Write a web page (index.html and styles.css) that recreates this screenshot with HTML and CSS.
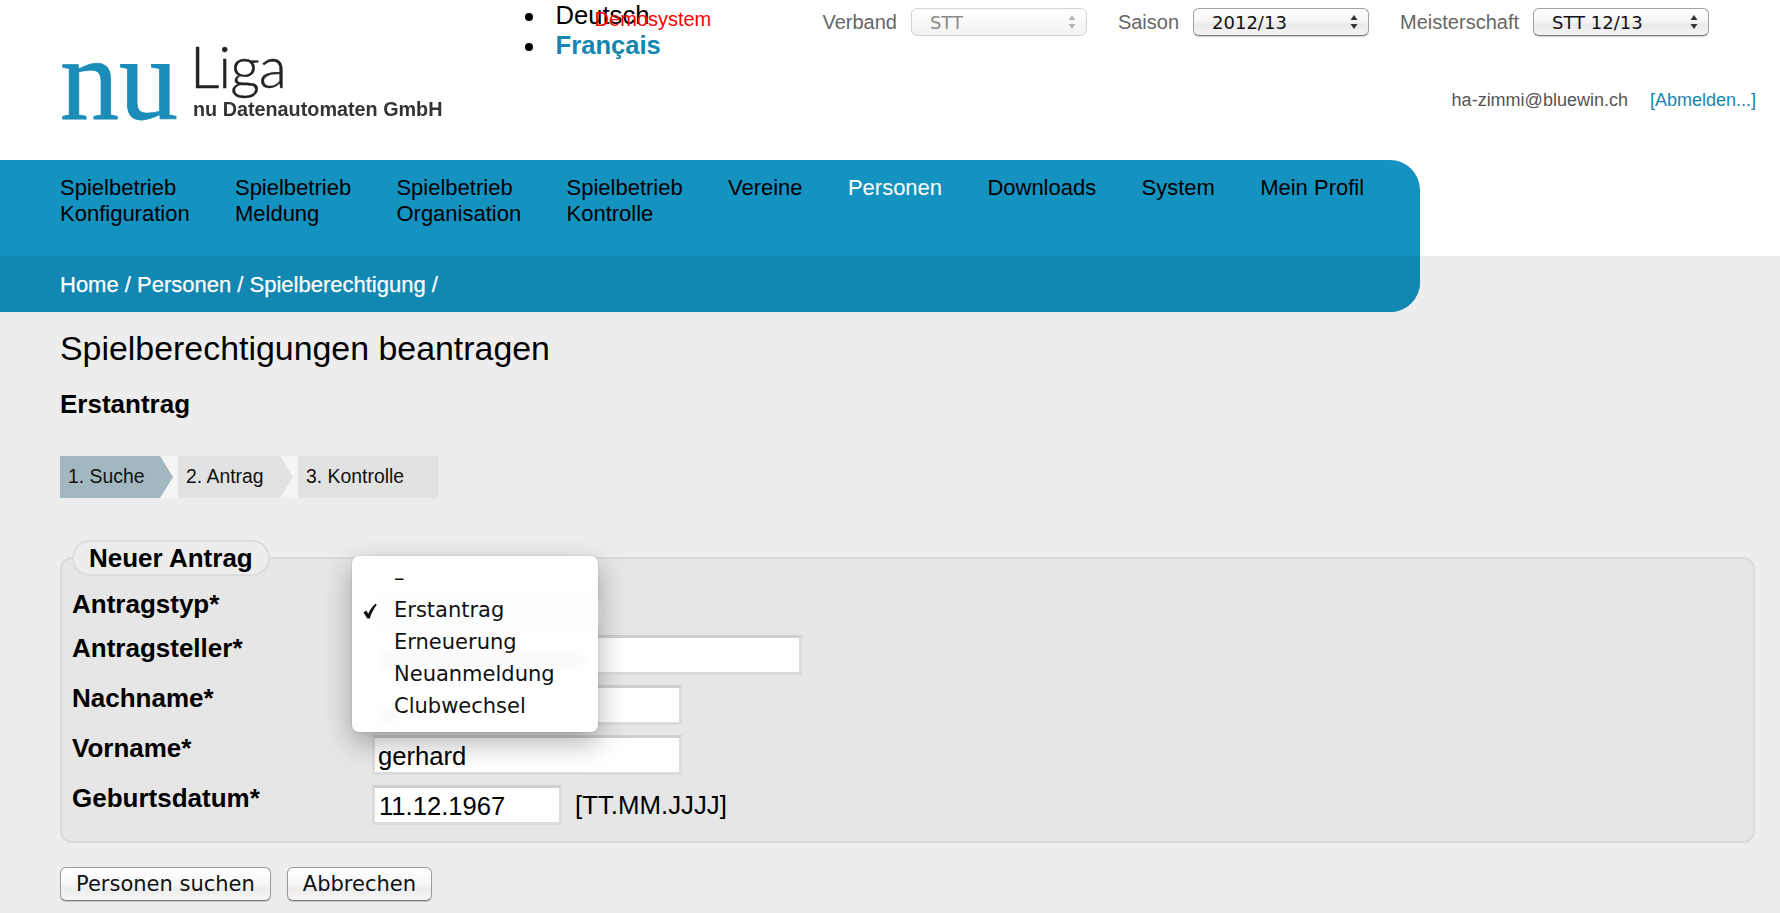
FILE: index.html
```html
<!DOCTYPE html>
<html lang="de">
<head>
<meta charset="utf-8">
<title>nuLiga – Spielberechtigungen beantragen</title>
<link rel="stylesheet" href="styles.css">
</head>
<body>
<header class="header">
  <div class="logo">
    <span class="logo-nu">nu</span>
    <div class="logo-text">
      <span class="logo-liga">Liga</span>
      <span class="logo-sub">nu Datenautomaten GmbH</span>
    </div>
  </div>
  <ul class="langs">
    <li>Deutsch</li>
    <li><a class="lang-link" href="#">Français</a></li>
    <li class="demo">Demosystem</li>
  </ul>
  <div class="tools">
    <div class="filters">
      <span class="filter-label">Verband</span>
      <div class="select select-off"><span>STT</span><svg class="updown" viewBox="0 0 8 16"><path d="M4 1 7.500 6H.5zM4 15 .5 10h7z"/></svg></div>
      <span class="filter-label">Saison</span>
      <div class="select"><span>2012/13</span><svg class="updown" viewBox="0 0 8 16"><path d="M4 1 7.500 6H.5zM4 15 .5 10h7z"/></svg></div>
      <span class="filter-label">Meisterschaft</span>
      <div class="select"><span>STT 12/13</span><svg class="updown" viewBox="0 0 8 16"><path d="M4 1 7.500 6H.5zM4 15 .5 10h7z"/></svg></div>
    </div>
    <div class="user">
      <span>ha-zimmi@bluewin.ch</span>
      <a href="#">[Abmelden...]</a>
    </div>
  </div>
</header>

<nav class="nav">
  <div class="nav-main">
    <a href="#">Spielbetrieb<br>Konfiguration</a>
    <a href="#">Spielbetrieb<br>Meldung</a>
    <a href="#">Spielbetrieb<br>Organisation</a>
    <a href="#">Spielbetrieb<br>Kontrolle</a>
    <a href="#">Vereine</a>
    <a href="#" class="active">Personen</a>
    <a href="#">Downloads</a>
    <a href="#">System</a>
    <a href="#">Mein Profil</a>
  </div>
  <div class="crumbs">Home / Personen / Spielberechtigung /</div>
</nav>

<main class="content">
  <h1>Spielberechtigungen beantragen</h1>
  <h2>Erstantrag</h2>
  <div class="steps">
    <div class="step step-now">1. Suche</div>
    <div class="sep sep-now"></div>
    <div class="step step-two">2. Antrag</div>
    <div class="sep"></div>
    <div class="step step-three">3. Kontrolle</div>
  </div>

  <fieldset class="box">
    <legend>Neuer Antrag</legend>
    <div class="form">
      <label class="first">Antragstyp*</label><div class="first"></div>
      <label>Antragsteller*</label><input class="wide" type="text" value="">
      <label>Nachname*</label><input class="mid" type="text" value="">
      <label>Vorname*</label><input class="mid" type="text" value="gerhard">
      <label>Geburtsdatum*</label>
      <div class="date-row"><input class="date" type="text" value="11.12.1967"><span>[TT.MM.JJJJ]</span></div>
    </div>
  </fieldset>

  <div class="buttons">
    <button type="button">Personen suchen</button>
    <button type="button">Abbrechen</button>
  </div>
</main>

<div class="menu">
  <i class="ghost ghost-select"></i>
  <i class="ghost ghost-name"></i>
  <i class="ghost ghost-last"></i>
  <div class="menu-item">–</div>
  <div class="menu-item"><svg class="check" viewBox="0 0 14 16"><path d="M.5 9.500 3.300 7.500 5.300 10.800C7 6.800 9.300 3.300 12.500.8L13.800 1.800C10.800 5.800 8.300 10.300 6.800 15.500H4.300z"/></svg>Erstantrag</div>
  <div class="menu-item">Erneuerung</div>
  <div class="menu-item">Neuanmeldung</div>
  <div class="menu-item">Clubwechsel</div>
</div>
</body>
</html>
```
FILE: styles.css
```css
* { box-sizing: border-box; }
html, body { height: 100%; }
body {
  margin: 0;
  overflow: hidden;
  font-family: "Liberation Sans", Arial, sans-serif;
  color: #000;
  background: linear-gradient(#fff 256px, #ededed 256px);
}
a { text-decoration: none; color: inherit; }

/* header */
.header { display: flex; height: 160px; padding-left: 60px; }
.logo { width: 456px; display: flex; align-items: flex-start; filter: blur(.45px); }
.logo-nu {
  margin-top: 25px;
  width: 130px;
  font-family: "Liberation Serif", serif;
  font-size: 118px;
  line-height: 110px;
  color: #1b8db8;
  -webkit-text-stroke: .8px #1b8db8;
}
.logo-text { display: flex; flex-direction: column; padding-top: 33px; }
.logo-liga { font-family: Lato, sans-serif; font-weight: 300; font-size: 58px; line-height: 66px; letter-spacing: -1px; color: #222; -webkit-text-stroke: .4px #222; }
.logo-sub { font-weight: 700; font-size: 19.8px; line-height: 22px; margin: -1px 0 0 3px; color: #333; }
.langs {
  position: relative;
  margin: 0;
  padding-left: 40px;
  width: 290px;
  font-size: 25.6px;
  line-height: 30px;
}
.langs li { padding-left: 9px; }
.lang-link { font-weight: 700; color: #1486b0; }
.langs .demo {
  position: absolute;
  left: 88px;
  top: 7px;
  padding-left: 0;
  list-style: none;
  font-size: 20px;
  line-height: 24px;
  color: #f00;
}
.tools { flex: 1; display: flex; flex-direction: column; padding-right: 24px; }
.filters {
  display: flex;
  align-items: center;
  justify-content: flex-end;
  padding: 8px 47px 0 0;
}
.filter-label { font-size: 20px; line-height: 28px; color: #666; margin: 0 14px 0 31px; }
.select {
  width: 176px;
  height: 28px;
  padding: 0 10px 0 18px;
  display: flex;
  align-items: center;
  justify-content: space-between;
  font-family: "DejaVu Sans", sans-serif;
  font-size: 18px;
  color: #111;
  background: linear-gradient(#fff, #f6f6f6 45%, #e9e9e9 60%, #f4f4f4);
  border: 1px solid #a2a2a2;
  border-bottom-color: #7f7f7f;
  border-radius: 6px;
  box-shadow: 0 1px 1px rgba(0, 0, 0, .18);
}
.select-off { color: #8a8a8a; border-color: #d4d4d4; box-shadow: none; background: linear-gradient(#fff, #f8f8f8 50%, #f2f2f2); }
.updown { width: 8px; height: 16px; fill: #333; }
.select-off .updown { fill: #b5b5b5; }
.user {
  display: flex;
  justify-content: flex-end;
  gap: 22px;
  margin-top: 52px;
  font-size: 18px;
  line-height: 24px;
  color: #555;
}
.user a { color: #1a85b0; }

/* navigation */
.nav {
  width: 1420px;
  border-radius: 0 30px 30px 0;
  overflow: hidden;
  background: #1492c0;
}
.nav-main {
  height: 96px;
  padding: 15px 0 0 60px;
  display: flex;
  gap: 45.3px;
  font-size: 22px;
  line-height: 26px;
}
.active { color: #fff; }
.crumbs {
  height: 56px;
  padding-left: 60px;
  font-size: 22px;
  line-height: 58px;
  color: #fff;
  -webkit-text-stroke: .25px #fff;
  background: #1187b2;
}

/* content */
.content { padding-left: 60px; }
h1 { margin: 16px 0 0; font-size: 33.9px; line-height: 40px; font-weight: 400; }
h2 { margin: 21px 0 0; font-size: 26px; line-height: 30px; font-weight: 700; }
.steps { display: flex; height: 42px; margin-top: 37px; font-size: 19.4px; line-height: 41px; }
.step { color: #111; background: #e2e2e2; }
.step-now { width: 100px; padding-left: 8px; background: #a2b7bf; }
.step-two { width: 102px; padding-left: 8px; }
.step-three { width: 140px; padding-left: 8px; }
.sep { width: 18px; background: #f5f5f5; }
.sep::before {
  content: "";
  display: block;
  width: 13px;
  height: 100%;
  background: #e2e2e2;
  clip-path: polygon(0 0, 100% 50%, 0 100%);
}
.sep-now::before { background: #a2b7bf; }

.box {
  width: 1695px;
  margin: 42px 0 0;
  padding: 0 10px 16px;
  min-width: 0;
  background: #e6e6e6;
  border: 2px solid #dadada;
  border-radius: 12px;
}
legend {
  margin-left: 0;
  padding: 0 15px;
  height: 36px;
  font-size: 26px;
  line-height: 32px;
  font-weight: 700;
  background: #ededed;
  border: 2px solid #dcdcdc;
  border-radius: 18px;
}
.form {
  display: grid;
  grid-template-columns: 300px 1fr;
  grid-template-rows: 34px repeat(4, 40px);
  row-gap: 10px;
  padding-top: 15px;
  align-items: start;
}
.form label { font-size: 26px; line-height: 24px; font-weight: 700; margin-top: 1px; }
.form label.first { line-height: 26px; margin-top: 0; }
.form input {
  height: 40px;
  padding: 2px 3px 0;
  font-family: "Liberation Sans", sans-serif;
  font-size: 25.6px;
  color: #000;
  background: #fff;
  border: 3px solid #dcdcdc;
  border-top-color: #cfcfcf;
  border-radius: 0;
  outline: none;
}
.wide { width: 430px; }
.mid { width: 310px; }
.form .date { width: 190px; padding-left: 4px; }
.date-row { display: flex; align-items: center; gap: 13px; font-size: 25.8px; }
.buttons { display: flex; gap: 16px; margin-top: 24px; }
button {
  height: 34px;
  padding: 0 15px;
  font-family: "DejaVu Sans", sans-serif;
  font-size: 21px;
  line-height: 30px;
  color: #111;
  background: linear-gradient(#fff, #f7f7f7 50%, #ececec 65%, #f6f6f6);
  border: 1px solid #9c9c9c;
  border-bottom-color: #7c7c7c;
  border-radius: 6px;
  box-shadow: 0 1px 1px rgba(0, 0, 0, .18);
}

/* open dropdown, lies over the form */
.menu {
  position: absolute;
  left: 352px;
  top: 556px;
  width: 246px;
  height: 176px;
  padding-top: 6px;
  overflow: visible;
  font-family: "DejaVu Sans", sans-serif;
  font-size: 21px;
  color: #111;
  background: #fff;
  border-radius: 7px;
  box-shadow: 0 10px 28px rgba(0, 0, 0, .32), 0 0 2px rgba(0, 0, 0, .15);
}
.menu-item {
  position: relative;
  height: 32px;
  padding-left: 42px;
  line-height: 32px;
}
.check { position: absolute; left: 11px; top: 9px; width: 14px; height: 16px; fill: #111; }
.ghost { position: absolute; display: block; filter: blur(3px); }
.ghost-select { left: 22px; top: 40px; width: 222px; height: 34px; border-radius: 8px; background: #fbfdfe; }
.ghost-name { left: 28px; top: 94px; width: 205px; height: 20px; background: #fbfbfb; }
.ghost-last { left: 28px; top: 154px; width: 20px; height: 14px; background: #fbfbfb; }
```
